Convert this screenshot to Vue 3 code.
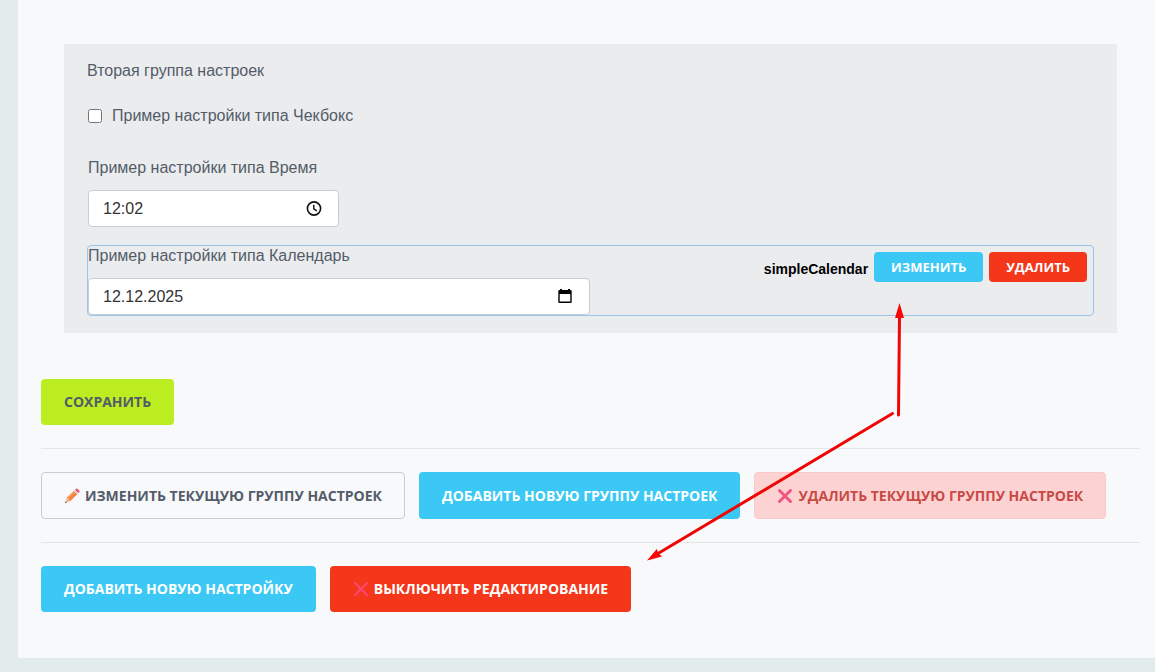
<script setup>
import { ref } from 'vue'

const checked = ref(false)
const time = ref('12:02')
const date = ref('12.12.2025')
</script>

<template>
  <div class="page">
    <main class="panel">
      <section class="group">
        <h2 class="group-title">Вторая группа настроек</h2>

        <div class="item item-check">
          <input id="simple-checkbox" v-model="checked" type="checkbox" class="check" />
          <label for="simple-checkbox">Пример настройки типа Чекбокс</label>
        </div>

        <div class="item item-field">
          <label for="simple-time">Пример настройки типа Время</label>
          <div class="field field-time">
            <input id="simple-time" v-model="time" type="text" class="field-input" />
            <svg class="field-icon" width="16" height="16" viewBox="0 0 16 16" fill="none" stroke="#111" stroke-width="1.6" aria-hidden="true">
              <circle cx="8" cy="7.500" r="6.6" />
              <path d="M7.800 3.700v4.100l3 2" stroke-width="1.4" />
            </svg>
          </div>
        </div>

        <div class="item item-active">
          <div class="item-field">
            <label for="simple-date">Пример настройки типа Календарь</label>
            <div class="field field-date">
              <input id="simple-date" v-model="date" type="text" class="field-input" />
              <svg class="field-icon" width="16" height="16" viewBox="0 0 16 16" aria-hidden="true">
                <path fill="#000" fill-rule="evenodd" d="M3 0h2v1h6V0h2v1h.5q1.200 0 1.200 1.200v10.600q0 1.200-1.200 1.200h-11Q1.300 14 1.300 12.800V2.200Q1.300 1 2.500 1H3zM2.700 5v7.600h10.600V5z" />
              </svg>
            </div>
          </div>
          <div class="item-tools">
            <span class="item-code">simpleCalendar</span>
            <button type="button" class="btn btn-small btn-blue">Изменить</button>
            <button type="button" class="btn btn-small btn-red">Удалить</button>
          </div>
        </div>
      </section>

      <div class="actions">
        <button type="button" class="btn btn-lime">Сохранить</button>
      </div>
      <hr class="rule" />
      <div class="actions actions-group">
        <button type="button" class="btn btn-outline">
          <svg class="icon" width="16" height="16" viewBox="0 0 16 16" aria-hidden="true">
            <path fill="#f4813f" d="M2.800 9.800 9.800 3l3.400 3.300-7 7z" />
            <path fill="#f9a35a" d="M2.800 9.800 9.800 3l1.200 1.100-7.100 7z" />
            <path fill="#e8b89a" d="M2.800 9.800 6.200 13.300 1 15.200z" />
            <path fill="#5c5450" d="M1.500 13.500 2.800 14.600.8 15.300z" />
            <path fill="#d5cdd8" d="m9.600 3.200 1.500-1.500 3.400 3.400-1.500 1.500z" />
            <path fill="#ee5566" d="m11 1.800 1-1q.8-.6 1.600.1l1.700 1.700q.7.800 0 1.600l-.9.900z" />
          </svg>
          Изменить текущую группу настроек
        </button>
        <button type="button" class="btn btn-blue">Добавить новую группу настроек</button>
        <button type="button" class="btn btn-pink">
          <svg class="icon" width="16" height="16" viewBox="0 0 16 16" fill="none" stroke="#f25580" stroke-width="3" stroke-linecap="round" aria-hidden="true">
            <path d="m2.500 2.500 11 11m0-11-11 11" />
          </svg>
          Удалить текущую группу настроек
        </button>
      </div>
      <hr class="rule" />
      <div class="actions">
        <button type="button" class="btn btn-blue">Добавить новую настройку</button>
        <button type="button" class="btn btn-red">
          <svg class="icon" width="16" height="16" viewBox="0 0 16 16" fill="none" stroke="#fb4777" stroke-width="2" stroke-linecap="round" aria-hidden="true">
            <path d="m2 2 12 12m0-12-12 12" />
          </svg>
          Выключить редактирование
        </button>
      </div>
    </main>

    <svg class="arrows" width="1155" height="672" viewBox="0 0 1155 672" aria-hidden="true">
      <g stroke="#f00505" stroke-width="3" stroke-linecap="round">
        <path d="M898.500 415 899.500 316" />
        <path d="M892.500 413.500 658 553.500" />
      </g>
      <path fill="#fa0505" d="m899.500 303 4.500 15h-9z" />
      <path fill="#fa0505" d="m647 560.500 9.800-11.500 1.500 4.300 3.700 3.200z" />
    </svg>
  </div>
</template>

<style>
body {
  margin: 0;
  background: #e2ebec;
}
</style>

<style scoped>
.page {
  position: relative;
  box-sizing: border-box;
  min-height: 100vh;
  padding: 0 0 14px 18px;
  background: #e2ebec;
  color: #535c69;
  font: 16px/20px "Liberation Sans", Arial, sans-serif;
  overflow: hidden;
}

.panel {
  padding: 44px 15px 46px 23px;
  background: #f8f9fb;
}

.group {
  margin: 0 23px 46px;
  padding: 17px 23px;
  background: #ebecee;
}

.group-title {
  margin: 0 0 24px;
  font-size: 16px;
  font-weight: 400;
}

.item {
  border: 1px solid transparent;
  border-radius: 4px;
}

.item-check {
  display: flex;
  align-items: center;
  gap: 10px;
  margin-bottom: 30px;
}

.check {
  width: 14px;
  height: 14px;
  margin: 0;
}

.item-field {
  display: flex;
  flex-direction: column;
  align-items: flex-start;
  gap: 12px;
}

.item-field.item {
  margin-bottom: 17px;
}

.item-active {
  display: flex;
  align-items: flex-start;
  justify-content: space-between;
  border-color: #9cc4e8;
}

.field {
  display: flex;
  align-items: center;
  box-sizing: border-box;
  height: 37px;
  padding: 0 16px 0 14px;
  border: 1px solid #c6cdd3;
  border-radius: 4px;
  background: #fff;
}

.field-time {
  width: 251px;
}

.field-date {
  width: 502px;
}

.field-input {
  flex: 1;
  min-width: 0;
  padding: 0;
  border: 0;
  outline: 0;
  background: transparent;
  color: #333;
  font: inherit;
}

.field-icon {
  flex: none;
}

.item-tools {
  display: flex;
  align-items: center;
  gap: 6px;
  padding: 6px;
}

.item-code {
  padding-top: 4px;
  color: #000;
  font-size: 14px;
  font-weight: 700;
}

.actions {
  display: flex;
  flex-wrap: wrap;
  gap: 14px;
}

.rule {
  height: 1px;
  margin: 23px 0;
  border: 0;
  background: #e2e6e9;
}

.btn {
  display: inline-flex;
  align-items: center;
  justify-content: center;
  gap: 5px;
  box-sizing: border-box;
  height: 46px;
  padding: 0 22px;
  border: 1px solid transparent;
  border-radius: 4px;
  color: #fff;
  font: 700 14px/20px "Open Sans", sans-serif;
  text-transform: uppercase;
  white-space: nowrap;
  cursor: pointer;
}

.actions-group .btn {
  height: 47px;
}

.btn-small {
  height: 30px;
  padding: 0 16px;
  font-size: 13px;
}

.btn-blue {
  background: #3bc8f5;
}

.btn-red {
  background: #f4361a;
}

.btn-lime {
  background: #bbed21;
  color: #535c69;
}

.btn-outline {
  border-color: #c6cdd3;
  background: transparent;
  color: #535c69;
}

.btn-pink {
  border-color: #f9c9c8;
  background: #fcd3d2;
  color: #c84a46;
}

.icon {
  flex: none;
}

.arrows {
  position: absolute;
  top: 0;
  left: 0;
  pointer-events: none;
}
</style>
